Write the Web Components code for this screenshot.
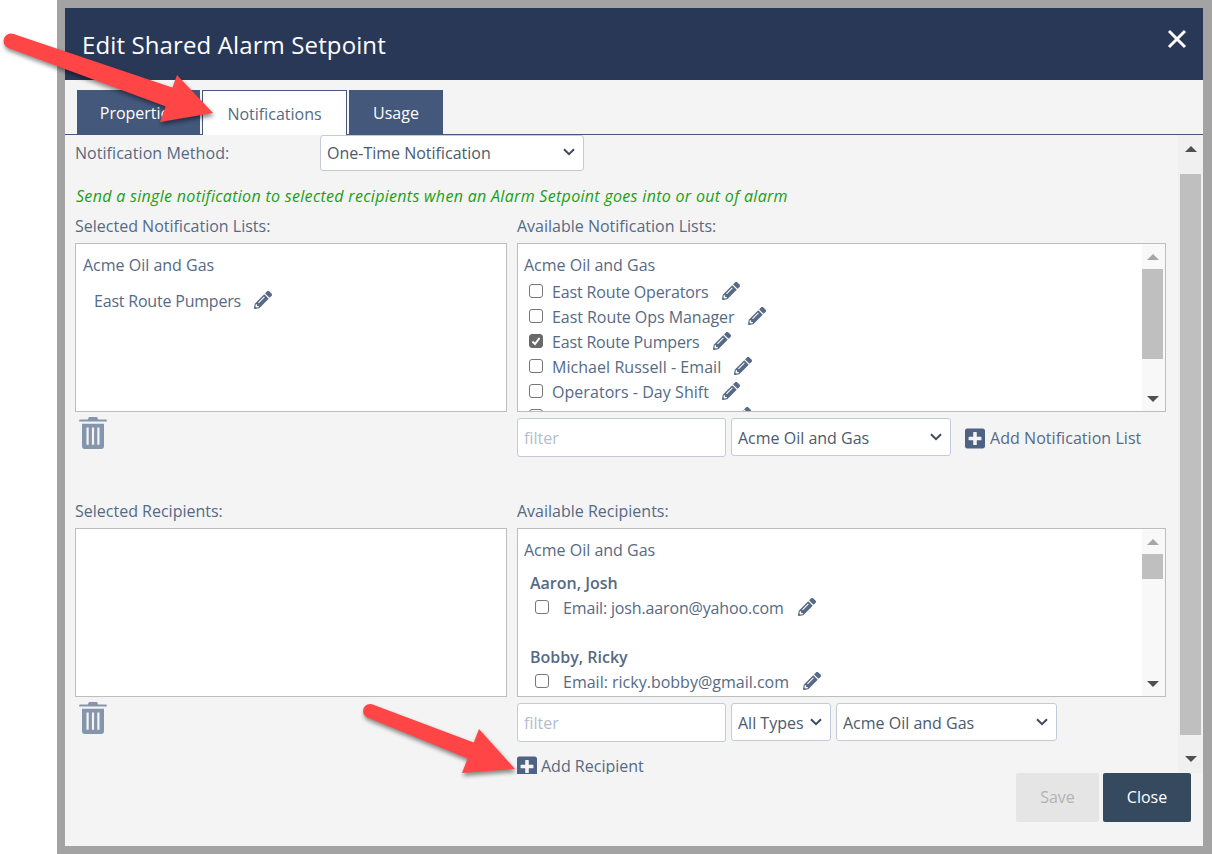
<!DOCTYPE html>
<html lang="en">
<head>
<meta charset="utf-8">
<title>Edit Shared Alarm Setpoint</title>
<style>
	html, body { margin: 0; height: 100%; }
	body { font: 16px/25px "Open Sans", "Liberation Sans", sans-serif; color: #566a85; background: #fff; overflow: hidden; }
</style>
</head>
<body>
<alarm-dialog heading="Edit Shared Alarm Setpoint">
	<tab-button slot="tabs" style="width:123px">Properties</tab-button>
	<tab-button slot="tabs" active style="width:145px">Notifications</tab-button>
	<tab-button slot="tabs" style="width:94px">Usage</tab-button>

	<method-row label="Notification Method:">
		<drop-select style="width:264px;height:36px;padding-top:0">One-Time Notification</drop-select>
	</method-row>
	<hint-line>Send a single notification to selected recipients when an Alarm Setpoint goes into or out of alarm</hint-line>

	<picker-row>
		<picker-column label="Selected Notification Lists:">
			<list-box slot="list" heading="Acme Oil and Gas" style="--inset:7px">
				<list-item plain style="margin-top:11px;letter-spacing:-.2px">East Route Pumpers</list-item>
			</list-box>
			<trash-button slot="controls"></trash-button>
		</picker-column>
		<picker-column label="Available Notification Lists:">
			<list-box slot="list" heading="Acme Oil and Gas" scroll thumb-height="90">
				<list-item style="margin-top:2px;letter-spacing:-.15px">East Route Operators</list-item>
				<list-item style="letter-spacing:-.05px">East Route Ops Manager</list-item>
				<list-item checked style="letter-spacing:-.17px">East Route Pumpers</list-item>
				<list-item style="letter-spacing:.05px">Michael Russell - Email</list-item>
				<list-item style="letter-spacing:.05px">Operators - Day Shift</list-item>
				<list-item>Operators - Night Shift</list-item>
			</list-box>
			<filter-input slot="controls"></filter-input>
			<drop-select slot="controls" style="width:220px;margin-left:5px">Acme Oil and Gas</drop-select>
			<add-link slot="controls" style="margin-left:14px">Add Notification List</add-link>
		</picker-column>
	</picker-row>

	<picker-row style="margin-top:43px">
		<picker-column label="Selected Recipients:">
			<list-box slot="list"></list-box>
			<trash-button slot="controls"></trash-button>
		</picker-column>
		<picker-column label="Available Recipients:">
			<list-box slot="list" heading="Acme Oil and Gas" scroll thumb-height="25">
				<recipient-group name="Aaron, Josh" style="margin-top:8px">
					<list-item indent style="letter-spacing:-.15px">Email: josh.aaron@yahoo.com</list-item>
				</recipient-group>
				<recipient-group name="Bobby, Ricky" style="margin-top:24px">
					<list-item indent>Email: ricky.bobby@gmail.com</list-item>
				</recipient-group>
			</list-box>
			<filter-input slot="controls"></filter-input>
			<drop-select slot="controls" style="width:100px;margin-left:5px">All Types</drop-select>
			<drop-select slot="controls" style="width:221px;margin-left:5px">Acme Oil and Gas</drop-select>
		</picker-column>
	</picker-row>
	<add-link style="margin:15px 0 0 442px">Add Recipient</add-link>

	<action-button slot="footer" disabled style="width:83px">Save</action-button>
	<action-button slot="footer" style="width:88px;margin-left:4px">Close</action-button>
</alarm-dialog>

<callout-arrow tail="11,41" neck="172,98" barb-a="177,75" tip="213,113" barb-b="160,122" tail-width="15" neck-width="20"></callout-arrow>
<callout-arrow tail="370,711" neck="472,751" barb-a="479,729" tip="515,769" barb-b="462,773" tail-width="14" neck-width="17"></callout-arrow>

<script>
const ICONS = {
	pencil: `<svg viewBox="0 0 512 512" width="18" height="18" fill="#566a85"><path d="M497.9 142.1l-46.1 46.1c-4.7 4.7-12.3 4.7-17 0l-111-111c-4.7-4.7-4.7-12.3 0-17l46.1-46.1c18.7-18.7 49.1-18.7 67.9 0l60.1 60.1c18.8 18.7 18.8 49.1 0 67.9zM284.2 99.8L21.6 362.4.4 483.9c-2.9 16.4 11.4 30.6 27.8 27.8l121.5-21.3 262.6-262.6c4.7-4.7 4.7-12.3 0-17l-111-111c-4.8-4.7-12.4-4.7-17.1 0zM124.1 339.9c-5.5-5.5-5.5-14.3 0-19.8l154-154c5.5-5.5 14.3-5.5 19.8 0s5.5 14.3 0 19.8l-154 154c-5.5 5.5-14.3 5.5-19.8 0zM88 424h48v36.3l-64.5 11.3-31.1-31.1L51.7 376H88v48z"/></svg>`,
	plus: `<svg viewBox="0 0 448 512" width="20" height="23" fill="#4f6284"><path d="M400 32H48C21.5 32 0 53.5 0 80v352c0 26.5 21.5 48 48 48h352c26.5 0 48-21.5 48-48V80c0-26.5-21.5-48-48-48zm-32 252c0 6.6-5.4 12-12 12h-92v92c0 6.6-5.4 12-12 12h-56c-6.6 0-12-5.4-12-12v-92H92c-6.6 0-12-5.4-12-12v-56c0-6.6 5.400-12 12-12h92v-92c0-6.600 5.400-12 12-12h56c6.600 0 12 5.400 12 12v92h92c6.600 0 12 5.400 12 12v56z"/></svg>`,
	chevron: `<svg viewBox="0 0 12 8" width="12" height="8" fill="none" stroke="#3f4a5a" stroke-width="2"><path d="M1 1.2l5 5 5-5"/></svg>`,
	trash: `<svg viewBox="0 2.2 28 29.8" width="28" height="32" preserveAspectRatio="none"><path fill="#8595ab" d="M1 4.5h26a.8.8 0 0 1 .8.8v1.2H.2V5.300a.8.8 0 0 1 .8-.8zM10 2.200h8l1.200 2.400H8.800zM3 8.500h22v21.200a2.300 2.300 0 0 1-2.300 2.300H5.300A2.300 2.300 0 0 1 3 29.700z"/><path fill="#f4f4f4" d="M7.500 12h2.200v16H7.500zM12.900 12h2.200v16h-2.200zM18.300 12h2.200v16h-2.200z"/></svg>`
};

// all the elements are plain template + shadow root, so keep that in one place
function defineElement(name, styles, markup) {
	customElements.define(name, class extends HTMLElement {
		connectedCallback() {
			if (this.shadowRoot) return;
			this.attachShadow({ mode: "open" });
			const attr = (key, fallback = "") => this.getAttribute(key) ?? fallback;
			const body = typeof markup === "function" ? markup(attr, this) : markup;
			this.shadowRoot.innerHTML = `<style>${styles}</style>${body}`;
		}
	});
}

defineElement("alarm-dialog", `
	:host { display: flex; width: 1212px; height: 854px; box-sizing: border-box; padding-left: 57px; }
	.backdrop { flex: 1; min-width: 0; display: flex; background: #a3a3a3; padding: 8px 9px 8px 8px; }
	.modal { flex: 1; min-width: 0; display: flex; flex-direction: column; background: #f4f4f4; }
	header { height: 72px; flex: none; background: #2a3857; color: #fff; display: flex; align-items: center; justify-content: space-between; padding: 0 16px 0 17px; box-sizing: border-box; }
	h1 { margin: 0 0 -2px; font-size: 24px; font-weight: 400; line-height: 32px; letter-spacing: .12px; }
	.x { width: 20px; height: 20px; margin-top: -11px; }
	nav { flex: none; height: 45px; margin-top: 10px; display: flex; gap: 2px; padding-left: 12px; border-bottom: 1px solid #44587c; box-sizing: border-box; }
	.main { flex: 1; min-height: 0; display: flex; }
	.form { flex: 1; min-width: 0; padding-left: 10px; margin-bottom: -1px; overflow: hidden; display: flex; flex-direction: column; align-items: flex-start; }
	footer { flex: none; height: 73px; display: flex; justify-content: flex-end; align-items: flex-start; padding-right: 12px; }
`, attr => `
	<div class="backdrop"><section class="modal">
		<header><h1>${attr("heading")}</h1>
			<svg class="x" viewBox="0 0 20 20" stroke="#fff" stroke-width="3" fill="none"><path d="M2 2l16 16M18 2L2 18"/></svg>
		</header>
		<nav><slot name="tabs"></slot></nav>
		<div class="main">
			<div class="form"><slot></slot></div>
			<scroll-strip style="width:25px;--btn:28px" pad="2" thumb-top="11" thumb-height="561"></scroll-strip>
		</div>
		<footer><slot name="footer"></slot></footer>
	</section></div>
`);

defineElement("tab-button", `
	:host { display: flex; height: 44px; box-sizing: border-box; padding-top: 2px; align-items: center; justify-content: center; background: #44587c; color: #fff; font-weight: 500; font-size: 16px; }
	:host([active]) { height: 45px; background: #fff; color: #566a85; font-weight: 400; border: 1px solid #44587c; border-bottom: 0; }
`, `<slot></slot>`);

// the browser's own scrollbars won't photograph the same way, so it is drawn
defineElement("scroll-strip", `
	:host { display: flex; flex-direction: column; flex: none; background: #f0f0f0; box-sizing: border-box; }
	.btn { height: var(--btn, 25px); flex: none; display: flex; align-items: center; justify-content: center; }
	.track { flex: 1; min-height: 0; }
	.thumb { background: #bfbfbf; }
	i { width: 0; height: 0; border-left: 6px solid transparent; border-right: 6px solid transparent; }
	.up { border-bottom: 6px solid var(--up, #505050); }
	.down { border-top: 6px solid #505050; }
`, attr => `
	<div class="btn"><i class="up"></i></div>
	<div class="track" style="padding:0 ${attr("pad", "0")}px"><div class="thumb" style="margin-top:${attr("thumb-top", "0")}px;height:${attr("thumb-height", "20")}px"></div></div>
	<div class="btn"><i class="down"></i></div>
`);

defineElement("method-row", `
	:host { display: flex; align-items: center; height: 36px; flex: none; }
	span { width: 245px; letter-spacing: .05px; }
`, attr => `<span>${attr("label")}</span><slot></slot>`);

defineElement("hint-line", `
	:host { display: block; margin-top: 13px; line-height: 24px; color: #1a9e1a; font-style: italic; letter-spacing: .31px; padding-left: 1px; flex: none; }
`, `<slot></slot>`);

defineElement("picker-row", `
	:host { display: flex; gap: 10px; margin-top: 7px; flex: none; }
`, `<slot></slot>`);

defineElement("picker-column", `
	:host { display: block; width: 432px; }
	:host(:last-child) { width: 649px; }
	label { display: block; height: 22px; line-height: 22px; margin-bottom: 6px; }
	.controls { display: flex; align-items: flex-start; margin-top: 6px; height: 39px; }
`, attr => `<label>${attr("label")}</label><slot name="list"></slot><div class="controls"><slot name="controls"></slot></div>`);

defineElement("list-box", `
	:host { display: flex; height: 169px; background: #fff; border: 1px solid #bdbdbd; box-sizing: border-box; overflow: hidden; }
	.content { flex: 1; min-width: 0; padding: 9px 0 0 var(--inset, 6px); }
	.heading { height: 25px; }
`, (attr, el) => `
	<div class="content">${attr("heading") ? `<div class="heading">${attr("heading")}</div>` : ""}<slot></slot></div>
	${el.hasAttribute("scroll") ? `<scroll-strip style="width:23px;padding-right:2px;height:100%;background:#f8f8f8;--up:#a6a6a6" thumb-height="${attr("thumb-height")}"></scroll-strip>` : ""}
`);

defineElement("list-item", `
	:host { display: flex; align-items: center; height: 25px; white-space: nowrap; padding-left: 5px; }
	:host([plain]) { padding-left: 11px; }
	.box { width: 14px; height: 14px; margin: -3px 9px 0 0; box-sizing: border-box; border: 1px solid #767676; border-radius: 3px; background: #fff; flex: none; display: block; }
	:host([indent]) .box { margin-right: 14px; }
	:host([checked]) .box { background: #696969; border-color: #696969; }
	.box svg { display: block; }
	.edit { display: flex; margin-left: 13px; margin-top: -3px; }
	:host([indent]) .edit { margin-left: 14px; }
`, (attr, el) => `
	${el.hasAttribute("plain") ? "" : `<span class="box">${el.hasAttribute("checked") ? `<svg viewBox="0 0 12 12" width="12" height="12" fill="none" stroke="#fff" stroke-width="2"><path d="M2.500 6.500l2.500 2.500 4.500-6"/></svg>` : ""}</span>`}
	<slot></slot><span class="edit">${ICONS.pencil}</span>
`);

defineElement("recipient-group", `
	:host { display: block; padding-left: 6px; }
	b { display: block; font-weight: 600; height: 25px; line-height: 25px; }
`, attr => `<b>${attr("name")}</b><slot></slot>`);

defineElement("drop-select", `
	:host { display: flex; align-items: center; justify-content: space-between; height: 38px; box-sizing: border-box; padding: 2px 8px 0 6px; border: 1px solid #c3cad8; border-radius: 3px; background: #fff; color: #4c5a6e; flex: none; }
	svg { margin-top: -2px; }
`, `<slot></slot>${ICONS.chevron}`);

defineElement("filter-input", `
	:host { display: flex; align-items: center; width: 209px; height: 39px; box-sizing: border-box; padding: 2px 6px 0; border: 1px solid #c3cad8; border-radius: 3px; background: #fff; color: #b4bdcc; flex: none; }
`, `filter`);

defineElement("add-link", `
	:host { display: flex; align-items: center; gap: 5px; height: 39px; padding-top: 1px; box-sizing: border-box; letter-spacing: .05px; flex: none; white-space: nowrap; }
	:host(:not([slot])) { height: 18px; gap: 4px; padding-top: 0; letter-spacing: 0; }
	svg { display: block; }
`, `${ICONS.plus}<slot></slot>`);

defineElement("trash-button", `
	:host { display: block; margin: -1px 0 0 4px; height: 32px; }
	svg { display: block; }
`, ICONS.trash);

defineElement("action-button", `
	:host { display: flex; align-items: center; justify-content: center; height: 49px; box-sizing: border-box; border-radius: 2px; background: #364a5f; color: #fff; flex: none; }
	:host([disabled]) { background: #e5e5e5; color: #b3b3b3; }
`, `<slot></slot>`);

// red annotation arrows sit over the screenshot, placed by page coordinates
function arrowShaft(tail, neck, tailWidth, neckWidth) {
	const dx = neck[0] - tail[0], dy = neck[1] - tail[1];
	const len = Math.hypot(dx, dy);
	const nx = -dy / len, ny = dx / len;
	const side = (p, w, s) => `${p[0] + s * nx * w / 2},${p[1] + s * ny * w / 2}`;
	return [side(tail, tailWidth, 1), side(tail, tailWidth, -1), side(neck, neckWidth, -1), side(neck, neckWidth, 1)].join(" ");
}

defineElement("callout-arrow", `
	:host { position: absolute; left: 0; top: 0; width: 1212px; height: 854px; pointer-events: none; }
	svg { display: block; filter: drop-shadow(1px 3px 2px rgba(0,0,0,.45)); }
`, attr => {
	const tail = attr("tail").split(",").map(Number);
	const neck = attr("neck").split(",").map(Number);
	const tw = +attr("tail-width"), nw = +attr("neck-width");
	return `
	<svg width="1212" height="854" viewBox="0 0 1212 854" fill="#ff4545">
		<circle cx="${tail[0]}" cy="${tail[1]}" r="${tw / 2}"/>
		<polygon points="${arrowShaft(tail, neck, tw, nw)}"/>
		<polygon points="${attr("barb-a")} ${attr("tip")} ${attr("barb-b")}"/>
	</svg>`;
});
</script>
</body>
</html>
